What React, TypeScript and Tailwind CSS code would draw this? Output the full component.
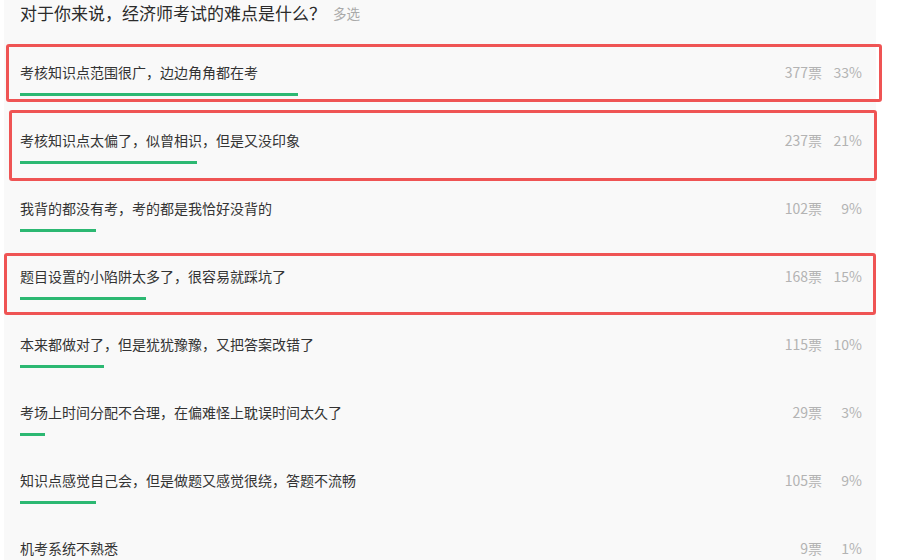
import React from "react";

const rows = [
  { text: "考核知识点范围很广，边边角角都在考", votes: 377, pct: 33 },
  { text: "考核知识点太偏了，似曾相识，但是又没印象", votes: 237, pct: 21 },
  { text: "我背的都没有考，考的都是我恰好没背的", votes: 102, pct: 9 },
  { text: "题目设置的小陷阱太多了，很容易就踩坑了", votes: 168, pct: 15 },
  { text: "本来都做对了，但是犹犹豫豫，又把答案改错了", votes: 115, pct: 10 },
  { text: "考场上时间分配不合理，在偏难怪上耽误时间太久了", votes: 29, pct: 3 },
  { text: "知识点感觉自己会，但是做题又感觉很绕，答题不流畅", votes: 105, pct: 9 },
  { text: "机考系统不熟悉", votes: 9, pct: 1 },
];

export default function App() {
  return (
    <div
      className="relative h-[560px] w-[912px] overflow-hidden bg-white"
      style={{ fontFamily: '"Microsoft YaHei", "Noto Sans CJK SC", "Noto Sans", sans-serif' }}
    >
      <div className="ml-[4px] h-[560px] w-[872px] bg-[#f9f9f9] pl-[16px] pr-[14px]">
        <div className="flex h-[25px] items-center">
          <span className="text-[17px] leading-[24px] text-[#2b2b2b]">
            对于你来说，经济师考试的难点是什么？
          </span>
          <span className="ml-[7px] text-[13.5px] leading-[24px] text-[#aaaaaa]">多选</span>
        </div>
        <div className="mt-[25px] flex flex-col">
          {rows.map((r) => (
            <div key={r.text} className="h-[68px] pt-[12px]">
              <div className="flex h-[20px] items-center text-[14px] leading-[20px]">
                <span className="flex-1 text-[#333333]">{r.text}</span>
                <span className="text-[#b3b3b3]">{r.votes}票</span>
                <span className="w-[40px] text-right text-[#b3b3b3]">{r.pct}%</span>
              </div>
              <div className="mt-[11px] h-[3px] w-full">
                <div
                  className="h-[3px] bg-[#2cb872]"
                  style={{ width: `${r.pct}%` }}
                />
              </div>
            </div>
          ))}
        </div>
      </div>

      {/* red annotation boxes */}
      <div className="absolute left-[6px] top-[44px] h-[58px] w-[876px] rounded-[3px] border-[3px] border-[#ef5454]" />
      <div className="absolute left-[9px] top-[110px] h-[71px] w-[868px] rounded-[3px] border-[3px] border-[#ef5454]" />
      <div className="absolute left-[4px] top-[253px] h-[62px] w-[872px] rounded-[3px] border-[3px] border-[#ef5454]" />
    </div>
  );
}
